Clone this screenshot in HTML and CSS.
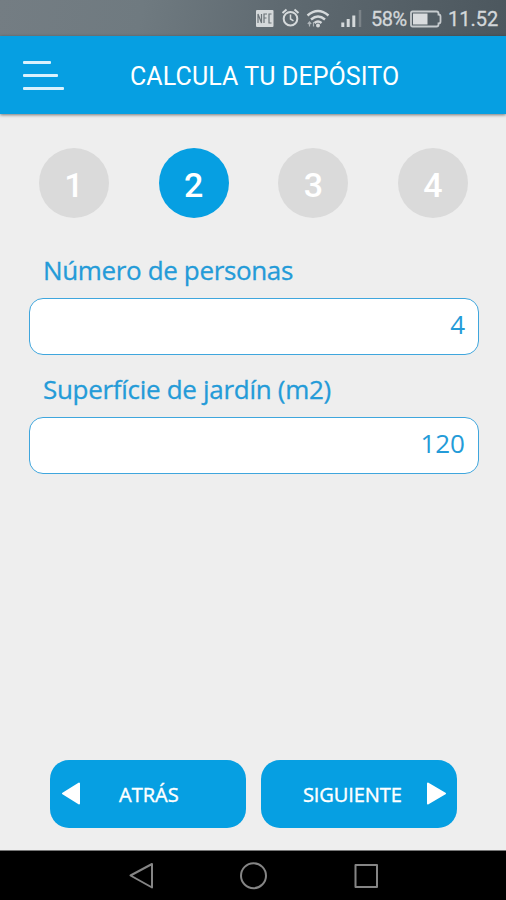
FILE: index.html
```html
<!DOCTYPE html>
<html lang="es">
<head>
<meta charset="utf-8">
<title>Calcula tu depósito</title>
<link rel="stylesheet" href="styles.css">
</head>
<body>
<div class="status">
  <svg class="status-icons" width="110" height="36" viewBox="254 0 110 36" fill="none" stroke="#d5d9db">
    <rect x="256" y="10" width="17.500" height="17" rx="1" fill="#d5d9db" stroke="none"/>
    <path d="M258 23V14l3.500 9V14M264 23V14h3M264 18h2.500M271.500 14h-2.500v9h2.500" stroke="#6c7479" stroke-width="1.200"/>
    <circle cx="290.500" cy="18.700" r="6.800" stroke-width="2"/>
    <path d="M282.500 13l4-3.400M298.500 13l-4-3.400" stroke-width="2"/>
    <path d="M290.500 14.500v4.500l3 1.800" stroke-width="1.500"/>
    <path d="M307.500 15.500q10.500-9 21 0M311 19.500q7-6 14 0M314.500 23q3.500-3 7 0" stroke-width="2.400"/>
    <circle cx="318" cy="25.500" r="2" fill="#d5d9db" stroke="none"/>
    <path d="M309.500 26.500v-4M307.800 24l1.700-2 1.700 2M313.500 22v4.500" stroke="#aeb5b9" stroke-width="1.200"/>
    <path d="M342.800 27v-4.500M348.200 27v-8M353.800 27V15.500" stroke-width="3"/>
    <path d="M360 27V10" stroke="#7b8388" stroke-width="2.500"/>
  </svg>
  <span class="percent">58%</span>
  <svg class="battery" width="32" height="18" viewBox="0 0 32 18">
    <path d="M2.500 1.500h24q2 0 2 2v1q2 0 2 2v5q0 2-2 2v1q0 2-2 2h-24q-1.500 0-1.500-1.500V3q0-1.500 1.500-1.500z" fill="none" stroke="#c6cbce" stroke-width="1.800"/>
    <rect x="3" y="3.500" width="14.500" height="11" fill="#d9dcde"/>
  </svg>
  <span class="clock">11.52</span>
</div>
<header class="header">
  <div class="menu"><i class="line short"></i><i class="line medium"></i><i class="line"></i></div>
  <h1 class="title">CALCULA TU DEPÓSITO</h1>
</header>
<main class="content">
  <div class="steps">
    <span class="step">1</span><span class="step active">2</span><span class="step">3</span><span class="step">4</span>
  </div>
  <div class="field">
    <div class="label people">Número de personas</div>
    <div class="input">4</div>
  </div>
  <div class="field">
    <div class="label garden">Superfície de jardín (m2)</div>
    <div class="input">120</div>
  </div>
  <div class="actions">
    <div class="button">
      <svg width="18" height="24" viewBox="0 0 18 24"><path d="M1 11.500L17 1.500V21.500z" fill="#fff" stroke="#fff" stroke-width="2" stroke-linejoin="round"/></svg>
      <span class="back">ATRÁS</span>
    </div>
    <div class="button next">
      <span class="forward">SIGUIENTE</span>
      <svg width="20" height="24" viewBox="0 0 20 24"><path d="M1 1.500L18 11.500 1 21.500z" fill="#fff" stroke="#fff" stroke-width="2" stroke-linejoin="round"/></svg>
    </div>
  </div>
</main>
<nav class="nav">
  <svg width="506" height="50" viewBox="0 850 506 50" fill="none" stroke="#858585" stroke-width="2" stroke-linejoin="round">
    <path d="M130.500 875.500L152 864v23.500z"/>
    <circle cx="253.500" cy="875.700" r="12.500"/>
    <rect x="355.500" y="865" width="21.500" height="22"/>
  </svg>
</nav>
</body>
</html>
```

FILE: styles.css
```css
* { box-sizing: border-box; }
body {
  margin: 0;
  width: 506px;
  height: 900px;
  display: flex;
  flex-direction: column;
  overflow: hidden;
  background: #eee;
  font-family: "Open Sans", sans-serif;
}
.status {
  height: 36px;
  display: flex;
  align-items: center;
  padding-left: 254px;
  background: linear-gradient(100deg, #747d83 0%, #6f7a80 28%, #5f6a71 55%, #4c575e 100%);
  color: #d3d7da;
  font: 20px/36px Roboto, sans-serif;
}
.status-icons { flex: none; }
.percent { width: 46px; padding: 2px 0 0 7px; letter-spacing: -.5px; -webkit-text-stroke: .3px; }
.battery { flex: none; margin-top: 1px; }
.clock { padding: 2px 0 0 6px; letter-spacing: 0; -webkit-text-stroke: .3px; }
.header {
  height: 78px;
  flex: none;
  display: flex;
  align-items: center;
  background: #069fe2;
  box-shadow: 0 1px 3px rgba(0, 0, 0, .5);
}
.menu {
  width: 107px;
  padding-left: 23px;
  display: flex;
  flex-direction: column;
  gap: 10px;
}
.line { width: 41px; height: 3px; border-radius: 1px; background: #d9f2fd; }
.short { width: 28px; }
.medium { width: 35px; }
.title {
  margin: 4px 0 0 23px;
  color: #fff;
  font: 400 25px/30px Roboto, sans-serif;
  letter-spacing: .1px;
  white-space: nowrap;
}
.content { flex: 1; display: flex; flex-direction: column; padding: 34px 28px 22px; }
.steps { display: flex; justify-content: space-between; padding: 0 10px 0 11px; margin-bottom: 33px; }
.step {
  width: 70px;
  height: 70px;
  padding-top: 2px;
  border-radius: 50%;
  background: #dadada;
  color: #fff;
  font: 500 34px/70px Roboto, sans-serif;
  text-align: center;
}
.active { background: #069fe2; }
.field { height: 118.500px; display: flex; flex-direction: column; }
.label {
  height: 47px;
  padding-left: 15px;
  color: #249bd8;
  font-size: 26px;
  line-height: 39px;
  letter-spacing: -.36px;
  -webkit-text-stroke: .3px;
  white-space: nowrap;
}
.garden { letter-spacing: -.3px; }
.input {
  width: 450px;
  height: 57px;
  margin-left: 1px;
  padding-right: 13px;
  border: 1.500px solid #3fa6dd;
  border-radius: 14px;
  background: #fff;
  color: #249bd8;
  font-size: 26px;
  line-height: 50px;
  text-align: right;
}
.actions { margin-top: auto; padding-left: 22px; display: flex; gap: 15px; }
.button {
  width: 196px;
  height: 68px;
  padding-left: 12px;
  display: flex;
  align-items: center;
  border-radius: 19px;
  background: #069fe2;
  color: #fff;
  font-size: 20px;
  -webkit-text-stroke: .4px;
}
.back { margin: 1px 0 0 39px; }
.next { padding: 0 10px 0 42px; justify-content: space-between; }
.forward { margin-top: 1px; letter-spacing: -.1px; }
.nav { height: 50px; flex: none; background: #000; border-top: 1px solid #777; }
.nav svg { display: block; margin-top: -1px; }
```
